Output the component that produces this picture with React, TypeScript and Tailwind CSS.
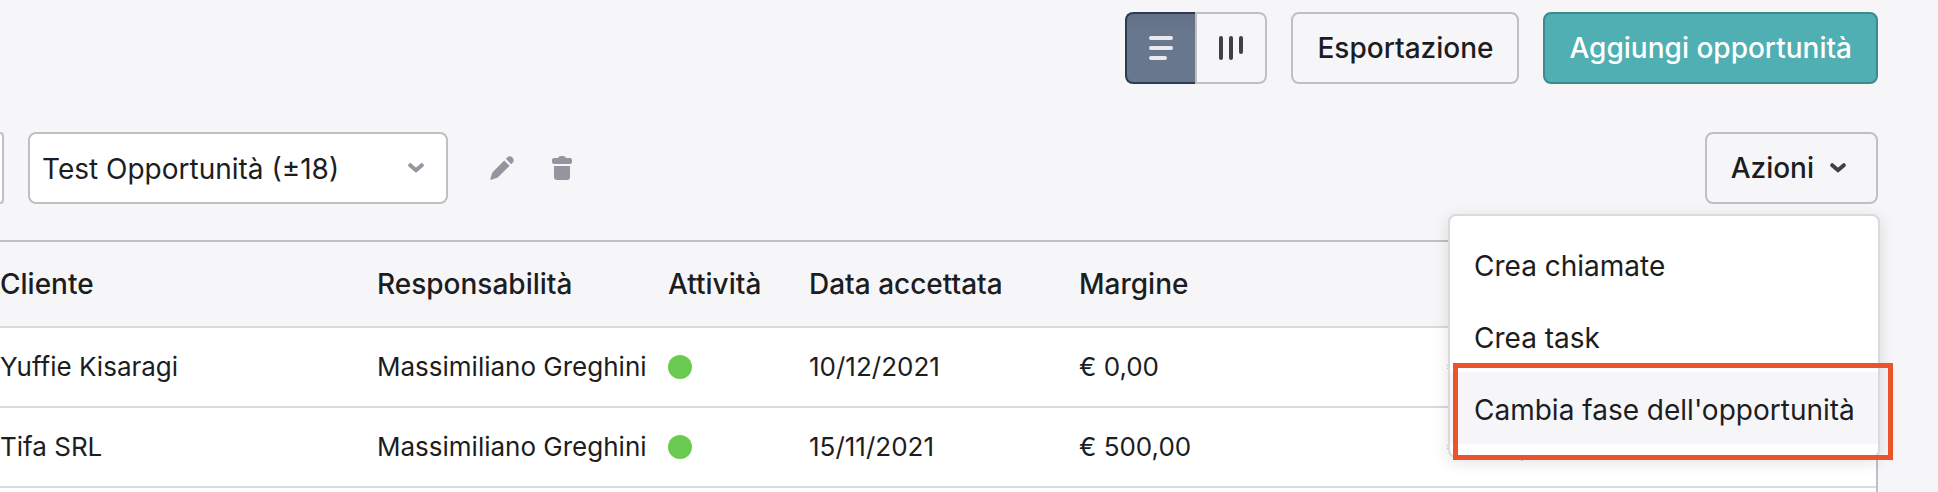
import { useState } from "react";

type Opportunity = {
  client: string;
  owner: string;
  date: string;
  margin: string;
  value: string;
};

const opportunities: Opportunity[] = [
  {
    client: "Yuffie Kisaragi",
    owner: "Massimiliano Greghini",
    date: "10/12/2021",
    margin: "€ 0,00",
    value: "€ 0,00",
  },
  {
    client: "Tifa SRL",
    owner: "Massimiliano Greghini",
    date: "15/11/2021",
    margin: "€ 500,00",
    value: "€ 500,00",
  },
];

const actions = ["Crea chiamate", "Crea task", "Cambia fase dell'opportunità"];

function Chevron({ className }: { className: string }) {
  return (
    <svg
      viewBox="0 0 16 10"
      fill="none"
      stroke="currentColor"
      strokeWidth="4"
      strokeLinecap="round"
      strokeLinejoin="miter"
      className={className}
      aria-hidden="true"
    >
      <path d="M2.2 2.2L8 7.2L13.8 2.2" />
    </svg>
  );
}

function ViewToggle() {
  const [view, setView] = useState("list");

  return (
    <div className="flex h-18">
      <button
        aria-label="Lista"
        aria-pressed={view === "list"}
        onClick={() => setView("list")}
        className="flex w-[70px] items-center justify-center rounded-l-lg border-2 border-r-0 border-[#2d3b50] bg-[#69778e] bg-linear-to-b from-[#637085] to-[#69778e] to-30% text-[#e8eaee]"
      >
        <svg
          viewBox="0 0 24 24"
          stroke="currentColor"
          strokeWidth="4"
          strokeLinecap="round"
          className="size-6"
        >
          <path d="M2 2H22M2 12H22M2 22H16" />
        </svg>
      </button>
      <button
        aria-label="Pipeline"
        aria-pressed={view === "board"}
        onClick={() => setView("board")}
        className="flex w-18 items-center justify-center rounded-r-lg border-2 border-[#c0c0c4] text-[#404146]"
      >
        <svg
          viewBox="0 0 24 24"
          stroke="currentColor"
          strokeWidth="4"
          strokeLinecap="round"
          className="size-6"
        >
          <path d="M2 2V22M12 2V22M22 2V16" />
        </svg>
      </button>
    </div>
  );
}

function ActionsMenu() {
  const [open, setOpen] = useState(true);

  return (
    <div className="relative">
      <button
        onClick={() => setOpen(!open)}
        aria-expanded={open}
        className="flex h-18 items-center gap-4 rounded-lg border-2 border-[#c0c0c4] pr-[30px] pl-6 font-medium"
      >
        Azioni
        <Chevron className="h-[10px] w-4 text-[#404146]" />
      </button>
      {open && (
        <div className="absolute top-[82px] -right-[2px] z-10 w-[432px] rounded-lg border-2 border-[#dadadc] bg-white py-3 shadow-[0_4px_16px_rgba(0,0,0,0.12)]">
          <ul>
            {actions.map((action) => (
              <li key={action} className="last:bg-[#f6f6f9]">
                <button className="flex h-18 w-full items-center px-6 pt-1 whitespace-nowrap hover:bg-[#f6f6f9]">
                  {action}
                </button>
              </li>
            ))}
          </ul>
          <div className="pointer-events-none absolute -right-[15px] -bottom-1 left-[3px] h-[97px] border-5 border-[#eb532d]" />
        </div>
      )}
    </div>
  );
}

export default function App() {
  return (
    <div className="h-screen overflow-hidden bg-[#f6f6f9] pt-3 pr-15 font-['Inter',sans-serif] text-[28px] leading-9 text-[#1c1d21]">
      <div className="flex justify-end gap-6">
        <ViewToggle />
        <button className="h-18 rounded-lg border-2 border-[#c0c0c4] px-6 font-medium">
          Esportazione
        </button>
        <button className="h-18 rounded-lg border-2 border-[#3a8b8d] bg-[#50afb2] px-6 font-medium text-white">
          Aggiungi opportunità
        </button>
      </div>

      <div className="mt-12 flex items-center">
        <div className="h-18 w-1 rounded-r-lg border-2 border-l-0 border-[#c0c0c4] bg-white" />
        <div className="relative ml-6 w-[420px]">
          <select
            aria-label="Filtro"
            className="h-18 w-full appearance-none rounded-lg border-2 border-[#c0c0c4] bg-white pt-[2px] pr-14 pl-3"
          >
            <option>Test Opportunità (±18)</option>
          </select>
          <Chevron className="pointer-events-none absolute top-[31px] right-6 h-[10px] w-4 text-[#95959f]" />
        </div>
        <button aria-label="Modifica" className="ml-[42px] text-[#95959f]">
          <svg viewBox="0 0 24 24" fill="currentColor" className="size-6">
            <path d="M14.2 4.4L19.6 9.8L8 21.2Q7.4 21.8 6.6 22L1.3 23.8Q.2 24 .4 22.8L2 17.5Q2.2 16.8 2.8 16.1ZM15.8 2.8L17.2 1.4Q19.8 -.8 22.4 1.5Q24.8 4.1 22.7 6.8L21.2 8.2Z" />
          </svg>
        </button>
        <button aria-label="Elimina" className="ml-[38px] text-[#95959f]">
          <svg viewBox="0 0 24 24" fill="currentColor" className="size-6">
            <path d="M2 10H18V21Q18 24 15 24H5Q2 24 2 21Z" />
            <path d="M6 2Q6.5 0 9 0H11Q13.5 0 14 2H18Q20 2 20 4V6Q20 8 18 8H2Q0 8 0 6V4Q0 2 2 2Z" />
          </svg>
        </button>
        <div className="ml-auto">
          <ActionsMenu />
        </div>
      </div>

      <div className="mt-9 border-t-2 border-r-2 border-[#c0c0c4]">
        <table className="w-full table-fixed text-left">
          <colgroup>
            <col className="w-[377px]" />
            <col className="w-[291px]" />
            <col className="w-[141px]" />
            <col className="w-[270px]" />
            <col className="w-[368px]" />
            <col />
          </colgroup>
          <thead>
            <tr className="h-[85px] border-b-2 border-[#dadadc]">
              <th className="font-medium">Cliente</th>
              <th className="font-medium">Responsabilità</th>
              <th className="font-medium">Attività</th>
              <th className="font-medium">Data accettata</th>
              <th className="font-medium">Margine</th>
              <th />
            </tr>
          </thead>
          <tbody className="bg-white text-[26px]">
            {opportunities.map((item) => (
              <tr key={item.client} className="h-20 border-b-2 border-[#dadadc]">
                <td>{item.client}</td>
                <td className="whitespace-nowrap">{item.owner}</td>
                <td>
                  <div className="size-6 rounded-full bg-[#69ca4f]" />
                </td>
                <td>{item.date}</td>
                <td>{item.margin}</td>
                <td>{item.value}</td>
              </tr>
            ))}
            <tr className="h-20">
              <td colSpan={6} />
            </tr>
          </tbody>
        </table>
      </div>
    </div>
  );
}
